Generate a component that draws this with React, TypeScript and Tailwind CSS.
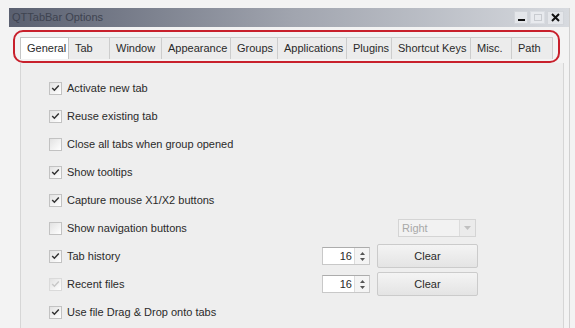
import React from "react";

const TABS = [
  { label: "General", w: "w-[49px]" },
  { label: "Tab", w: "w-[41px]" },
  { label: "Window", w: "w-[52px]" },
  { label: "Appearance", w: "w-[69px]" },
  { label: "Groups", w: "w-[47px]" },
  { label: "Applications", w: "w-[69px]" },
  { label: "Plugins", w: "w-[45px]" },
  { label: "Shortcut Keys", w: "w-[79px]" },
  { label: "Misc.", w: "w-[41px]" },
  { label: "Path", w: "w-[41px]" },
];

type Opt = { label: string; checked: boolean; disabled?: boolean; extra?: "combo" | "spin" };

const OPTIONS: Opt[] = [
  { label: "Activate new tab", checked: true },
  { label: "Reuse existing tab", checked: true },
  { label: "Close all tabs when group opened", checked: false },
  { label: "Show tooltips", checked: true },
  { label: "Capture mouse X1/X2 buttons", checked: true },
  { label: "Show navigation buttons", checked: false, extra: "combo" },
  { label: "Tab history", checked: true, extra: "spin" },
  { label: "Recent files", checked: true, disabled: true, extra: "spin" },
  { label: "Use file Drag & Drop onto tabs", checked: true },
];

function CheckBox({ checked, disabled }: { checked: boolean; disabled?: boolean }) {
  return (
    <div
      className={`w-[13px] h-[13px] flex-shrink-0 border flex items-center justify-center bg-gradient-to-br from-[#e2e2e2] to-white ${
        disabled ? "border-[#dadada]" : "border-[#c2c2c2]"
      }`}
    >
      {checked && (
        <svg width="9" height="8" viewBox="0 0 9 8">
          <path
            d="M1.2 4 L3.4 6.2 L7.8 1.6"
            fill="none"
            stroke={disabled ? "#c8c8c8" : "#333"}
            strokeWidth="1.5"
          />
        </svg>
      )}
    </div>
  );
}

function Spinner() {
  return (
    <div className="w-[48px] h-[18px] flex border border-[#c8c8c8] border-t-[#acacac] bg-white">
      <span className="flex-1 text-right pr-[2px] leading-[16px] text-[#2a2a2a]">16</span>
      <div className="w-[15px] flex flex-col items-center justify-center gap-[3px] bg-[#f4f4f4] border-l border-[#dcdcdc]">
        <svg width="5" height="3" viewBox="0 0 5 3"><path d="M0 3 L2.5 0 L5 3 Z" fill="#555" /></svg>
        <svg width="5" height="3" viewBox="0 0 5 3"><path d="M0 0 L2.5 3 L5 0 Z" fill="#555" /></svg>
      </div>
    </div>
  );
}

function ClearButton() {
  return (
    <div className="w-[101px] h-[24px] ml-[7px] flex items-center justify-center border border-[#cbcbcb] rounded-[2px] bg-gradient-to-b from-[#f4f4f4] to-[#e4e4e4] text-[#2a2a2a]">
      Clear
    </div>
  );
}

function Combo() {
  return (
    <div className="w-[78px] h-[18px] mr-[2px] flex border border-[#d4d4d4] bg-[#f2f2f2]">
      <span className="flex-1 pl-[3px] leading-[16px] text-[#a8a8a8]">Right</span>
      <div className="w-[16px] flex items-center justify-center border-l border-[#dcdcdc] bg-[#ebebeb]">
        <svg width="7" height="4" viewBox="0 0 7 4"><path d="M0 0 L3.5 4 L7 0 Z" fill="#c0c0c0" /></svg>
      </div>
    </div>
  );
}

export default function App() {
  return (
    <div className="w-[575px] h-[328px] overflow-hidden bg-[#f3f3f3] pt-[8px] pl-[9px] font-['Liberation_Sans',Arial,sans-serif] text-[11px] text-[#2a2a2a]">
      <div className="w-[561px] h-[320px] flex flex-col border-r border-[#d0d0d0]">
        {/* Title bar */}
        <div className="h-[19px] flex items-center bg-gradient-to-r from-[#5a6070] via-[#a0a4ae] to-[#d7dadf]">
          <span className="pl-[3px] text-[#3e4350] leading-none">QTTabBar Options</span>
          <div className="ml-auto mr-[5px] flex items-center gap-[2px]">
            <div className="w-[14px] h-[13px] flex items-end justify-center pb-[2px] bg-[#e4e6ea] border border-[#d2d5da]">
              <div className="w-[7px] h-[2px] bg-[#111]" />
            </div>
            <div className="w-[15px] h-[13px] flex items-center justify-center bg-[#e8eaee] border border-[#dadde2]">
              <div className="w-[8px] h-[7px] border border-[#c8cbd0]" />
            </div>
            <div className="w-[17px] h-[14px] flex items-center justify-center bg-[#e4e6ea] border border-[#d2d5da]">
              <svg width="9" height="9" viewBox="0 0 9 9">
                <path d="M1 1 L8 8 M8 1 L1 8" stroke="#111" strokeWidth="2" />
              </svg>
            </div>
          </div>
        </div>

        {/* Tab strip with red highlight */}
        <div className="mt-[3px] ml-[4px] w-[547px] h-[33px] border-2 border-[#c8202c] rounded-[10px] flex items-end pl-[5px] pb-[2px]">
          {TABS.map((t, i) => (
            <div
              key={t.label}
              className={`${t.w} h-[22px] flex items-center pl-[6px] ${
                i === 0
                  ? "bg-white border-l border-t border-r border-[#c6c6c6]"
                  : "bg-[#ececec] border-r border-t border-[#cdcdcd]"
              }`}
            >
              {t.label}
            </div>
          ))}
        </div>

        {/* Tab page */}
        <div className="ml-[11px] w-[544px] flex-1 border-l border-r border-[#d6d6d6] bg-[#eeeeee] pt-[11px] pl-[28px] pr-[85px]">
          {OPTIONS.map((o) => (
            <div key={o.label} className="h-[28px] flex items-center">
              <CheckBox checked={o.checked} disabled={o.disabled} />
              <span className="ml-[5px] flex-1">{o.label}</span>
              {o.extra === "combo" && <Combo />}
              {o.extra === "spin" && (
                <>
                  <Spinner />
                  <ClearButton />
                </>
              )}
            </div>
          ))}
        </div>
      </div>
    </div>
  );
}
